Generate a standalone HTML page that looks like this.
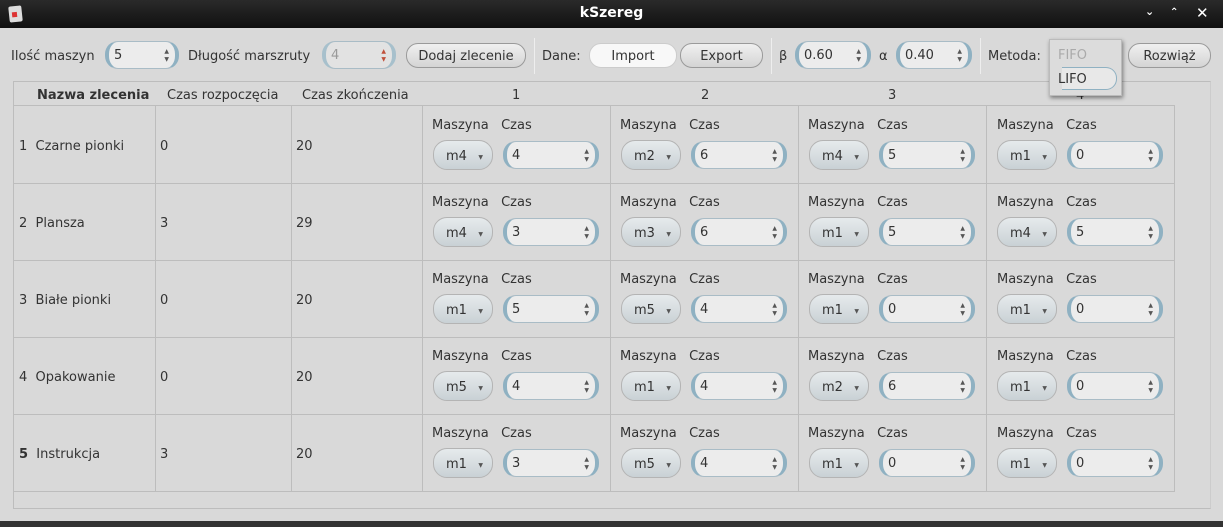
<!DOCTYPE html>
<html><head><meta charset="utf-8"><style>
*{box-sizing:border-box;margin:0;padding:0}
body{width:1223px;height:527px;background:#d9d9d9;font-family:"DejaVu Sans","Liberation Sans",sans-serif;font-size:13px;color:#333;position:relative;overflow:hidden}
.a{position:absolute;white-space:nowrap;margin-top:2px}
.nm{margin-top:0}
.title{left:0;top:0;width:1223px;height:28px;background:linear-gradient(#2a2a2a,#101010)}
.sp{position:absolute;height:28px;border:1px solid #a9bcc6;border-left:4px solid #8fb1c2;border-right:4px solid #8fb1c2;border-radius:13px;background:#ececec;padding-left:5px;line-height:27px}
.sp .ar{position:absolute;right:6px;top:6px;font-size:6px;line-height:8px;color:#555;text-align:center}
.cb{position:absolute;width:60px;height:30px;border:1px solid #b4b4b4;border-radius:14px;background:linear-gradient(#e6eaec,#c9d1d5);line-height:31px;padding-left:12px}
.cb i{position:absolute;right:9px;top:1px;font-style:normal;font-size:6px;color:#555}
.btn{position:absolute;height:25px;border:1px solid #9a9a9a;border-radius:12px;background:linear-gradient(#f0f0f0,#d4d4d4);text-align:center;line-height:25px}
.sep{position:absolute;top:38px;width:1px;height:36px;background:#b5b5b5;border-right:1px solid #eee}
.vl{position:absolute;width:1px;background:#bdbdbd}
.hl{position:absolute;height:1px;background:#bdbdbd}
</style></head><body>
<div class="a nm title"></div>
<div class="a nm" style="left:9px;top:6px;width:13px;height:16px;background:#ddd;border-radius:2px;transform:rotate(-6deg)"><div style="margin:6px 3px;width:5px;height:5px;background:#d33"></div></div>
<div class="a nm" style="left:0;top:5px;width:1223px;text-align:center;color:#fff;font-weight:bold;font-size:14px">kSzereg</div>
<div class="a nm" style="left:1145px;top:5px;color:#fff;font-size:11px;font-weight:bold">⌄</div>
<div class="a nm" style="left:1170px;top:7px;color:#fff;font-size:10px;font-weight:bold">⌃</div>
<div class="a nm" style="left:1196px;top:4px;color:#fff;font-size:15px;font-weight:bold">✕</div>

<!-- toolbar -->
<div class="a" style="left:11px;top:47px">Ilość maszyn</div>
<div class="sp" style="left:105px;top:41px;width:74px">5<div class="ar">▲<br>▼</div></div>
<div class="a" style="left:188px;top:47px">Długość marszruty</div>
<div class="sp" style="left:322px;top:41px;width:74px;color:#999;background:#e2e2e2;border-left-color:#a7c0cc;border-right-color:#a7c0cc">4<div class="ar" style="color:#c0503a">▲<br>▼</div></div>
<div class="btn" style="left:406px;top:43px;width:120px">Dodaj zlecenie</div>
<div class="sep" style="left:534px"></div>
<div class="a" style="left:542px;top:47px">Dane:</div>
<div class="btn" style="left:589px;top:43px;width:88px;background:#f8f8f8;border-color:#ccc">Import</div>
<div class="btn" style="left:680px;top:43px;width:83px">Export</div>
<div class="sep" style="left:771px"></div>
<div class="a" style="left:779px;top:47px">β</div>
<div class="sp" style="left:795px;top:41px;width:76px">0.60<div class="ar">▲<br>▼</div></div>
<div class="a" style="left:879px;top:47px">α</div>
<div class="sp" style="left:896px;top:41px;width:76px">0.40<div class="ar">▲<br>▼</div></div>
<div class="sep" style="left:980px"></div>
<div class="a" style="left:988px;top:47px">Metoda:</div>
<div class="btn" style="left:1128px;top:43px;width:83px">Rozwiąż</div>

<!-- table frame -->
<div class="a nm" style="left:13px;top:81px;width:1198px;height:428px;border:1px solid #bdbdbd;border-right-color:#ccc"></div>
<div class="hl" style="left:14px;top:105px;width:1161px"></div>
<div class="vl" style="left:1174px;top:105px;height:387px"></div>
<div class="hl" style="left:14px;top:491px;width:1161px"></div>
<div class="hl" style="left:14px;top:183px;width:1161px"></div>
<div class="hl" style="left:14px;top:260px;width:1161px"></div>
<div class="hl" style="left:14px;top:337px;width:1161px"></div>
<div class="hl" style="left:14px;top:414px;width:1161px"></div>
<div class="vl" style="left:155px;top:106px;height:385px"></div>
<div class="vl" style="left:291px;top:106px;height:385px"></div>
<div class="vl" style="left:422px;top:106px;height:385px"></div>
<div class="vl" style="left:610px;top:106px;height:385px"></div>
<div class="vl" style="left:798px;top:106px;height:385px"></div>
<div class="vl" style="left:986px;top:106px;height:385px"></div>
<div class="a nm" style="left:0;top:521px;width:1223px;height:6px;background:#333"></div>

<div class="a" style="left:37px;top:86px;font-weight:bold">Nazwa zlecenia</div>
<div class="a" style="left:167px;top:86px">Czas rozpoczęcia</div>
<div class="a" style="left:302px;top:86px">Czas zkończenia</div>
<div class="a" style="left:512px;top:86px">1</div>
<div class="a" style="left:701px;top:86px">2</div>
<div class="a" style="left:888px;top:86px">3</div>
<div class="a" style="left:1076px;top:86px">4</div>

<div class="a" style="left:19px;top:137px">1&nbsp; Czarne pionki</div><div class="a" style="left:160px;top:137px">0</div><div class="a" style="left:296px;top:137px">20</div>
<div class="a" style="left:19px;top:214px">2&nbsp; Plansza</div><div class="a" style="left:160px;top:214px">3</div><div class="a" style="left:296px;top:214px">29</div>
<div class="a" style="left:19px;top:291px">3&nbsp; Białe pionki</div><div class="a" style="left:160px;top:291px">0</div><div class="a" style="left:296px;top:291px">20</div>
<div class="a" style="left:19px;top:368px">4&nbsp; Opakowanie</div><div class="a" style="left:160px;top:368px">0</div><div class="a" style="left:296px;top:368px">20</div>
<div class="a" style="left:19px;top:445px"><b>5</b>&nbsp; Instrukcja</div><div class="a" style="left:160px;top:445px">3</div><div class="a" style="left:296px;top:445px">20</div>

<!-- cells: labels -->
<div class="a" style="left:432px;top:116px">Maszyna&nbsp;&nbsp; Czas</div><div class="a" style="left:620px;top:116px">Maszyna&nbsp;&nbsp; Czas</div><div class="a" style="left:808px;top:116px">Maszyna&nbsp;&nbsp; Czas</div><div class="a" style="left:997px;top:116px">Maszyna&nbsp;&nbsp; Czas</div>
<div class="a" style="left:432px;top:193px">Maszyna&nbsp;&nbsp; Czas</div><div class="a" style="left:620px;top:193px">Maszyna&nbsp;&nbsp; Czas</div><div class="a" style="left:808px;top:193px">Maszyna&nbsp;&nbsp; Czas</div><div class="a" style="left:997px;top:193px">Maszyna&nbsp;&nbsp; Czas</div>
<div class="a" style="left:432px;top:270px">Maszyna&nbsp;&nbsp; Czas</div><div class="a" style="left:620px;top:270px">Maszyna&nbsp;&nbsp; Czas</div><div class="a" style="left:808px;top:270px">Maszyna&nbsp;&nbsp; Czas</div><div class="a" style="left:997px;top:270px">Maszyna&nbsp;&nbsp; Czas</div>
<div class="a" style="left:432px;top:347px">Maszyna&nbsp;&nbsp; Czas</div><div class="a" style="left:620px;top:347px">Maszyna&nbsp;&nbsp; Czas</div><div class="a" style="left:808px;top:347px">Maszyna&nbsp;&nbsp; Czas</div><div class="a" style="left:997px;top:347px">Maszyna&nbsp;&nbsp; Czas</div>
<div class="a" style="left:432px;top:424px">Maszyna&nbsp;&nbsp; Czas</div><div class="a" style="left:620px;top:424px">Maszyna&nbsp;&nbsp; Czas</div><div class="a" style="left:808px;top:424px">Maszyna&nbsp;&nbsp; Czas</div><div class="a" style="left:997px;top:424px">Maszyna&nbsp;&nbsp; Czas</div>

<!-- row1 -->
<div class="cb" style="left:433px;top:140px">m4<i>▼</i></div><div class="sp" style="left:503px;top:141px;width:96px">4<div class="ar">▲<br>▼</div></div>
<div class="cb" style="left:621px;top:140px">m2<i>▼</i></div><div class="sp" style="left:691px;top:141px;width:96px">6<div class="ar">▲<br>▼</div></div>
<div class="cb" style="left:809px;top:140px">m4<i>▼</i></div><div class="sp" style="left:879px;top:141px;width:96px">5<div class="ar">▲<br>▼</div></div>
<div class="cb" style="left:997px;top:140px">m1<i>▼</i></div><div class="sp" style="left:1067px;top:141px;width:96px">0<div class="ar">▲<br>▼</div></div>
<!-- row2 -->
<div class="cb" style="left:433px;top:217px">m4<i>▼</i></div><div class="sp" style="left:503px;top:218px;width:96px">3<div class="ar">▲<br>▼</div></div>
<div class="cb" style="left:621px;top:217px">m3<i>▼</i></div><div class="sp" style="left:691px;top:218px;width:96px">6<div class="ar">▲<br>▼</div></div>
<div class="cb" style="left:809px;top:217px">m1<i>▼</i></div><div class="sp" style="left:879px;top:218px;width:96px">5<div class="ar">▲<br>▼</div></div>
<div class="cb" style="left:997px;top:217px">m4<i>▼</i></div><div class="sp" style="left:1067px;top:218px;width:96px">5<div class="ar">▲<br>▼</div></div>
<!-- row3 -->
<div class="cb" style="left:433px;top:294px">m1<i>▼</i></div><div class="sp" style="left:503px;top:295px;width:96px">5<div class="ar">▲<br>▼</div></div>
<div class="cb" style="left:621px;top:294px">m5<i>▼</i></div><div class="sp" style="left:691px;top:295px;width:96px">4<div class="ar">▲<br>▼</div></div>
<div class="cb" style="left:809px;top:294px">m1<i>▼</i></div><div class="sp" style="left:879px;top:295px;width:96px">0<div class="ar">▲<br>▼</div></div>
<div class="cb" style="left:997px;top:294px">m1<i>▼</i></div><div class="sp" style="left:1067px;top:295px;width:96px">0<div class="ar">▲<br>▼</div></div>
<!-- row4 -->
<div class="cb" style="left:433px;top:371px">m5<i>▼</i></div><div class="sp" style="left:503px;top:372px;width:96px">4<div class="ar">▲<br>▼</div></div>
<div class="cb" style="left:621px;top:371px">m1<i>▼</i></div><div class="sp" style="left:691px;top:372px;width:96px">4<div class="ar">▲<br>▼</div></div>
<div class="cb" style="left:809px;top:371px">m2<i>▼</i></div><div class="sp" style="left:879px;top:372px;width:96px">6<div class="ar">▲<br>▼</div></div>
<div class="cb" style="left:997px;top:371px">m1<i>▼</i></div><div class="sp" style="left:1067px;top:372px;width:96px">0<div class="ar">▲<br>▼</div></div>
<!-- row5 -->
<div class="cb" style="left:433px;top:448px">m1<i>▼</i></div><div class="sp" style="left:503px;top:449px;width:96px">3<div class="ar">▲<br>▼</div></div>
<div class="cb" style="left:621px;top:448px">m5<i>▼</i></div><div class="sp" style="left:691px;top:449px;width:96px">4<div class="ar">▲<br>▼</div></div>
<div class="cb" style="left:809px;top:448px">m1<i>▼</i></div><div class="sp" style="left:879px;top:449px;width:96px">0<div class="ar">▲<br>▼</div></div>
<div class="cb" style="left:997px;top:448px">m1<i>▼</i></div><div class="sp" style="left:1067px;top:449px;width:96px">0<div class="ar">▲<br>▼</div></div>

<!-- popup -->
<div class="a nm" style="left:1049px;top:39px;width:73px;height:57px;background:#dcdcdc;border:1px solid #bbb;box-shadow:1px 2px 4px rgba(0,0,0,.45)">
<div class="a" style="left:8px;top:6px;color:#aaa">FIFO</div>
<div class="a nm" style="left:12px;top:27px;width:55px;height:23px;background:#e8e8e8;border:1px solid #8fb1c2;border-radius:0 11px 11px 0;border-left:none"></div>
<div class="a" style="left:8px;top:30px">LIFO</div>
</div>
</body></html>
